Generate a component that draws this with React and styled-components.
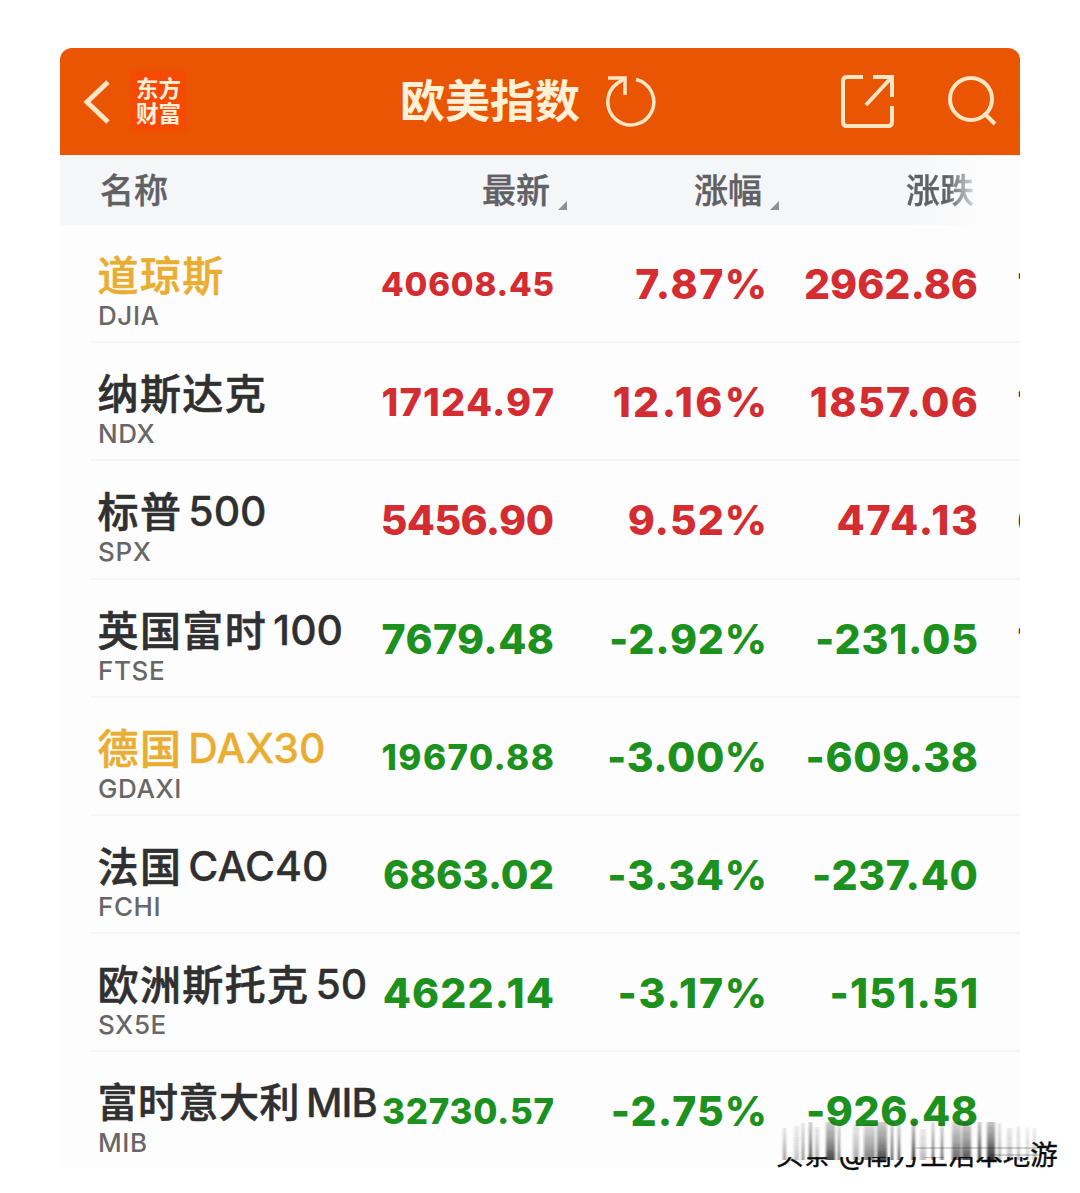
import styled, { createGlobalStyle } from 'styled-components';

const GlobalStyle = createGlobalStyle`
  * {
    box-sizing: border-box;
  }

  body {
    margin: 0;
    background-color: #FFFFFF;
    font-family: Inter, "Noto Sans CJK SC", sans-serif;
  }

  h1, p {
    margin: 0;
  }
`;

const Container = styled.div`
  position: relative;
  width: 1080px;
  height: 1193px;
  padding: 48px 60px 0;
  overflow: hidden;
`;

const Panel = styled.main`
  width: 960px;
  height: 1120px;
  overflow: hidden;
  border-radius: 12px 12px 0 0;
  background-color: #FDFDFD;
`;

const Header = styled.header`
  display: flex;
  align-items: center;
  height: 107px;
  padding: 0 22px 0 21px;
  background-color: #E95503;
  color: #FFF0D8;

  svg {
    display: block;
    fill: none;
    stroke: #FFE6C4;
  }
`;

const Logo = styled.div`
  display: flex;
  flex-direction: column;
  justify-content: center;
  align-items: center;
  width: 55px;
  height: 58px;
  margin: 0 0 2px 20px;
  background-color: #F64A04;
  box-shadow: 0 0 3px #F64A04;
  font-size: 22.5px;
  font-weight: 700;
  line-height: 25px;
`;

const Title = styled.div`
  display: flex;
  align-items: center;
  margin-left: 214px;

  h1 {
    width: 180px;
    font-size: 45px;
    line-height: 60px;
    font-weight: 700;
    white-space: nowrap;
  }

  svg {
    margin-left: 24px;
  }
`;

const Actions = styled.div`
  display: flex;
  gap: 51px;
  margin-left: auto;
`;

const TableHead = styled.div`
  display: grid;
  grid-template-columns: 307px 161px 212px 1fr;
  height: 70px;
  padding-left: 40px;
  border-top: 1px solid #FFF1DC;
  background: linear-gradient(to right, #F5F6F8 0 88%, #FDFDFD 97%);
  color: #5F6164;
`;

const HeadCell = styled.div`
  display: flex;
  align-items: flex-start;
  justify-content: ${({ $right }) => ($right ? 'flex-end' : 'flex-start')};
  padding-top: 11px;
  padding-left: ${({ $fade }) => ($fade ? 126 : 0)}px;
  font-size: 34px;
  line-height: 48px;
  font-weight: 500;
  white-space: nowrap;
  -webkit-text-stroke: 0.4px #5F6164;

  span {
    ${({ $fade }) => ($fade ? `
      color: transparent;
      background: linear-gradient(to right, #5F6164 60%, #D5D6D8 100%);
      background-clip: text;
      -webkit-text-stroke: 0.4px transparent;
    ` : '')}
  }
`;

const SortMark = styled.i`
  width: 9px;
  height: 9px;
  margin: 34px 1px 0 8px;
  background-color: #8F9194;
  clip-path: polygon(100% 0, 100% 100%, 0 100%);
`;

const Row = styled.div`
  display: grid;
  grid-template-columns: 284px 172px 213px 211px 1fr;
  height: 118.2px;
  margin-left: 30px;
  padding-left: 8px;
  border-bottom: 2px solid #F6F6F6;

  &:last-child {
    border-bottom: none;
  }
`;

const NameCell = styled.div`
  display: flex;
  flex-direction: column;
  padding-top: 22px;
`;

const Name = styled.div`
  display: flex;
  align-items: center;
  gap: 6px;
  height: 56px;
  font-size: ${({ $tight }) => ($tight ? 40 : 41)}px;
  font-weight: 500;
  color: ${({ $held }) => ($held ? '#E9AE31' : '#303030')};
  white-space: nowrap;

  span {
    margin: -4px 0 0 -0.5px;
    letter-spacing: ${({ $tight }) => ($tight ? 0.5 : 1.4)}px;
    -webkit-text-stroke: 0.6px currentColor;
  }

  b {
    font-weight: 500;
    letter-spacing: ${({ $tight }) => ($tight ? -1 : 0)}px;
    -webkit-text-stroke: 0.3px currentColor;
  }
`;

const Code = styled.p`
  font-size: 26px;
  line-height: 26px;
  font-weight: 500;
  letter-spacing: 0.6px;
  color: #676767;
`;

const Value = styled.div`
  display: flex;
  align-items: center;
  justify-content: flex-end;
  height: 118px;
  margin-right: ${({ $spacing }) => -($spacing || 0)}px;
  font-size: ${({ $size }) => $size || 41}px;
  font-weight: 800;
  letter-spacing: ${({ $spacing }) => $spacing || 0}px;
  color: ${({ $up }) => ($up ? '#D32D32' : '#1D911D')};
  white-space: nowrap;
`;

const Clipped = styled.div`
  display: flex;
  align-items: center;
  height: 118px;
  padding-left: 39px;
  overflow: hidden;
  font-size: 41px;
  font-weight: 700;
  color: #303030;
`;

const Watermark = styled.div`
  position: absolute;
  left: 776px;
  top: 1122px;
  width: 284px;
  height: 54px;
`;

const WatermarkText = styled.div`
  position: absolute;
  left: 0;
  bottom: 0;
  font-size: 27.5px;
  line-height: 42px;
  color: #0C0C0C;
  white-space: nowrap;
  -webkit-text-stroke: 0.4px #0C0C0C;
  clip-path: polygon(0 23px, 254px 23px, 254px 0, 100% 0, 100% 100%, 0 100%);
`;

const Streaks = styled.svg`
  position: absolute;
  left: 0;
  top: 0;
`;

const indices = [
  {
    name: '道琼斯', code: 'DJIA', up: true, held: true, next: '1',
    price: ['40608.45', 0.8, 33], rate: ['7.87%', 1.5], change: ['2962.86', 0],
  },
  {
    name: '纳斯达克', code: 'NDX', up: true, next: '1',
    price: ['17124.97', 1.2, 38], rate: ['12.16%', 2.4], change: ['1857.06', 1.4],
  },
  {
    name: '标普', latin: '500', code: 'SPX', up: true, next: '6',
    price: ['5456.90', -0.6, 41], rate: ['9.52%', 1], change: ['474.13', 1.8],
  },
  {
    name: '英国富时', latin: '100', code: 'FTSE', next: '1',
    price: ['7679.48', 0.4, 41], rate: ['-2.92%', 0.8], change: ['-231.05', 0.8],
  },
  {
    name: '德国', latin: 'DAX30', code: 'GDAXI', held: true,
    price: ['19670.88', 1.4, 35], rate: ['-3.00%', 0.5], change: ['-609.38', 0.7],
  },
  {
    name: '法国', latin: 'CAC40', code: 'FCHI',
    price: ['6863.02', 0, 40], rate: ['-3.34%', 0.7], change: ['-237.40', 0.7],
  },
  {
    name: '欧洲斯托克', latin: '50', code: 'SX5E',
    price: ['4622.14', 1.1, 41], rate: ['-3.17%', 1.8], change: ['-151.51', 1.2],
  },
  {
    name: '富时意大利', latin: 'MIB', code: 'MIB', tight: true,
    price: ['32730.57', 0.7, 35], rate: ['-2.75%', 1.1], change: ['-926.48', 0.6],
  },
];

// x, width, top, opacity
const streaks = [
  [7, 3, 6, 0.5], [18, 5, 4, 0.25], [26, 2, 1, 0.7], [33, 3, 0, 0.9], [39, 4, 5, 0.4],
  [50, 9, 0, 0.85], [62, 2, 2, 0.8], [77, 6, 3, 0.4], [88, 11, 2, 0.6], [101, 10, 0, 0.85],
  [115, 2, 0, 1], [122, 2, 3, 1], [136, 3, 0, 1], [144, 6, 7, 0.3], [156, 2, 0, 0.9],
  [165, 2, 0, 0.9], [176, 9, 0, 0.7], [186, 9, 0, 0.8], [202, 3, 0, 1], [211, 8, 0, 1],
  [222, 3, 1, 0.4], [231, 5, 6, 0.3], [241, 3, 4, 0.3], [250, 3, 5, 0.25], [257, 3, 6, 0.3],
];

export default function App() {
  return (
    <Container>
      <GlobalStyle />
      <Panel>
        <Header>
          <svg width="30" height="48" viewBox="0 0 30 48">
            <path d="M27 4 6 24l21 20" strokeWidth="5" />
          </svg>
          <Logo>
            <span>东方</span>
            <span>财富</span>
          </Logo>
          <Title>
            <h1>欧美指数</h1>
            <svg width="52" height="54" viewBox="0 0 52 54" strokeWidth="3.5">
              <path d="M32 4.5A23 23 0 1 1 13 8.5L20 4" />
              <path d="M4 3h17v17" />
            </svg>
          </Title>
          <Actions>
            <svg width="56" height="56" viewBox="0 0 56 56" strokeWidth="4">
              <path d="M24 3H8Q4 3 4 7v41q0 4 4 4h41q4 0 4-4V32" />
              <path d="M34 3h19v20M52 4 27 31" />
            </svg>
            <svg width="52" height="54" viewBox="0 0 52 54" strokeWidth="4">
              <circle cx="25" cy="25" r="21" />
              <path d="m38 39 11 11" />
            </svg>
          </Actions>
        </Header>
        <TableHead>
          <HeadCell><span>名称</span></HeadCell>
          <HeadCell $right>
            <span>最新</span>
            <SortMark />
          </HeadCell>
          <HeadCell $right>
            <span>涨幅</span>
            <SortMark />
          </HeadCell>
          <HeadCell $fade><span>涨跌</span></HeadCell>
        </TableHead>
        {indices.map(({ name, latin, code, up, held, tight, next, price, rate, change }) => (
          <Row key={code}>
            <NameCell>
              <Name $held={held} $tight={tight}>
                <span>{name}</span>
                {latin ? <b>{latin}</b> : null}
              </Name>
              <Code>{code}</Code>
            </NameCell>
            <Value $up={up} $spacing={price[1]} $size={price[2]}>{price[0]}</Value>
            <Value $up={up} $spacing={rate[1]}>{rate[0]}</Value>
            <Value $up={up} $spacing={change[1]}>{change[0]}</Value>
            <Clipped>{next}</Clipped>
          </Row>
        ))}
      </Panel>
      <Watermark>
        <Streaks width="284" height="54" viewBox="0 0 284 54">
          <defs>
            <linearGradient id="streak" x1="0" y1="0" x2="0" y2="1">
              <stop offset="0" stopColor="#222" stopOpacity="0.25" />
              <stop offset="0.5" stopColor="#222" stopOpacity="0.55" />
              <stop offset="1" stopColor="#111" stopOpacity="0.9" />
            </linearGradient>
            <filter id="soften">
              <feGaussianBlur stdDeviation="0.9 0.4" />
            </filter>
          </defs>
          <g filter="url(#soften)">
            {streaks.map(([x, width, top, opacity]) => (
              <rect key={x} x={x} y={top} width={width} height={38 - top} opacity={opacity} fill="url(#streak)" />
            ))}
            <path d="M140 26h120M215 33h50" stroke="#222" opacity="0.4" />
          </g>
        </Streaks>
        <WatermarkText>头条 @南方生活本地游</WatermarkText>
      </Watermark>
    </Container>
  );
}
